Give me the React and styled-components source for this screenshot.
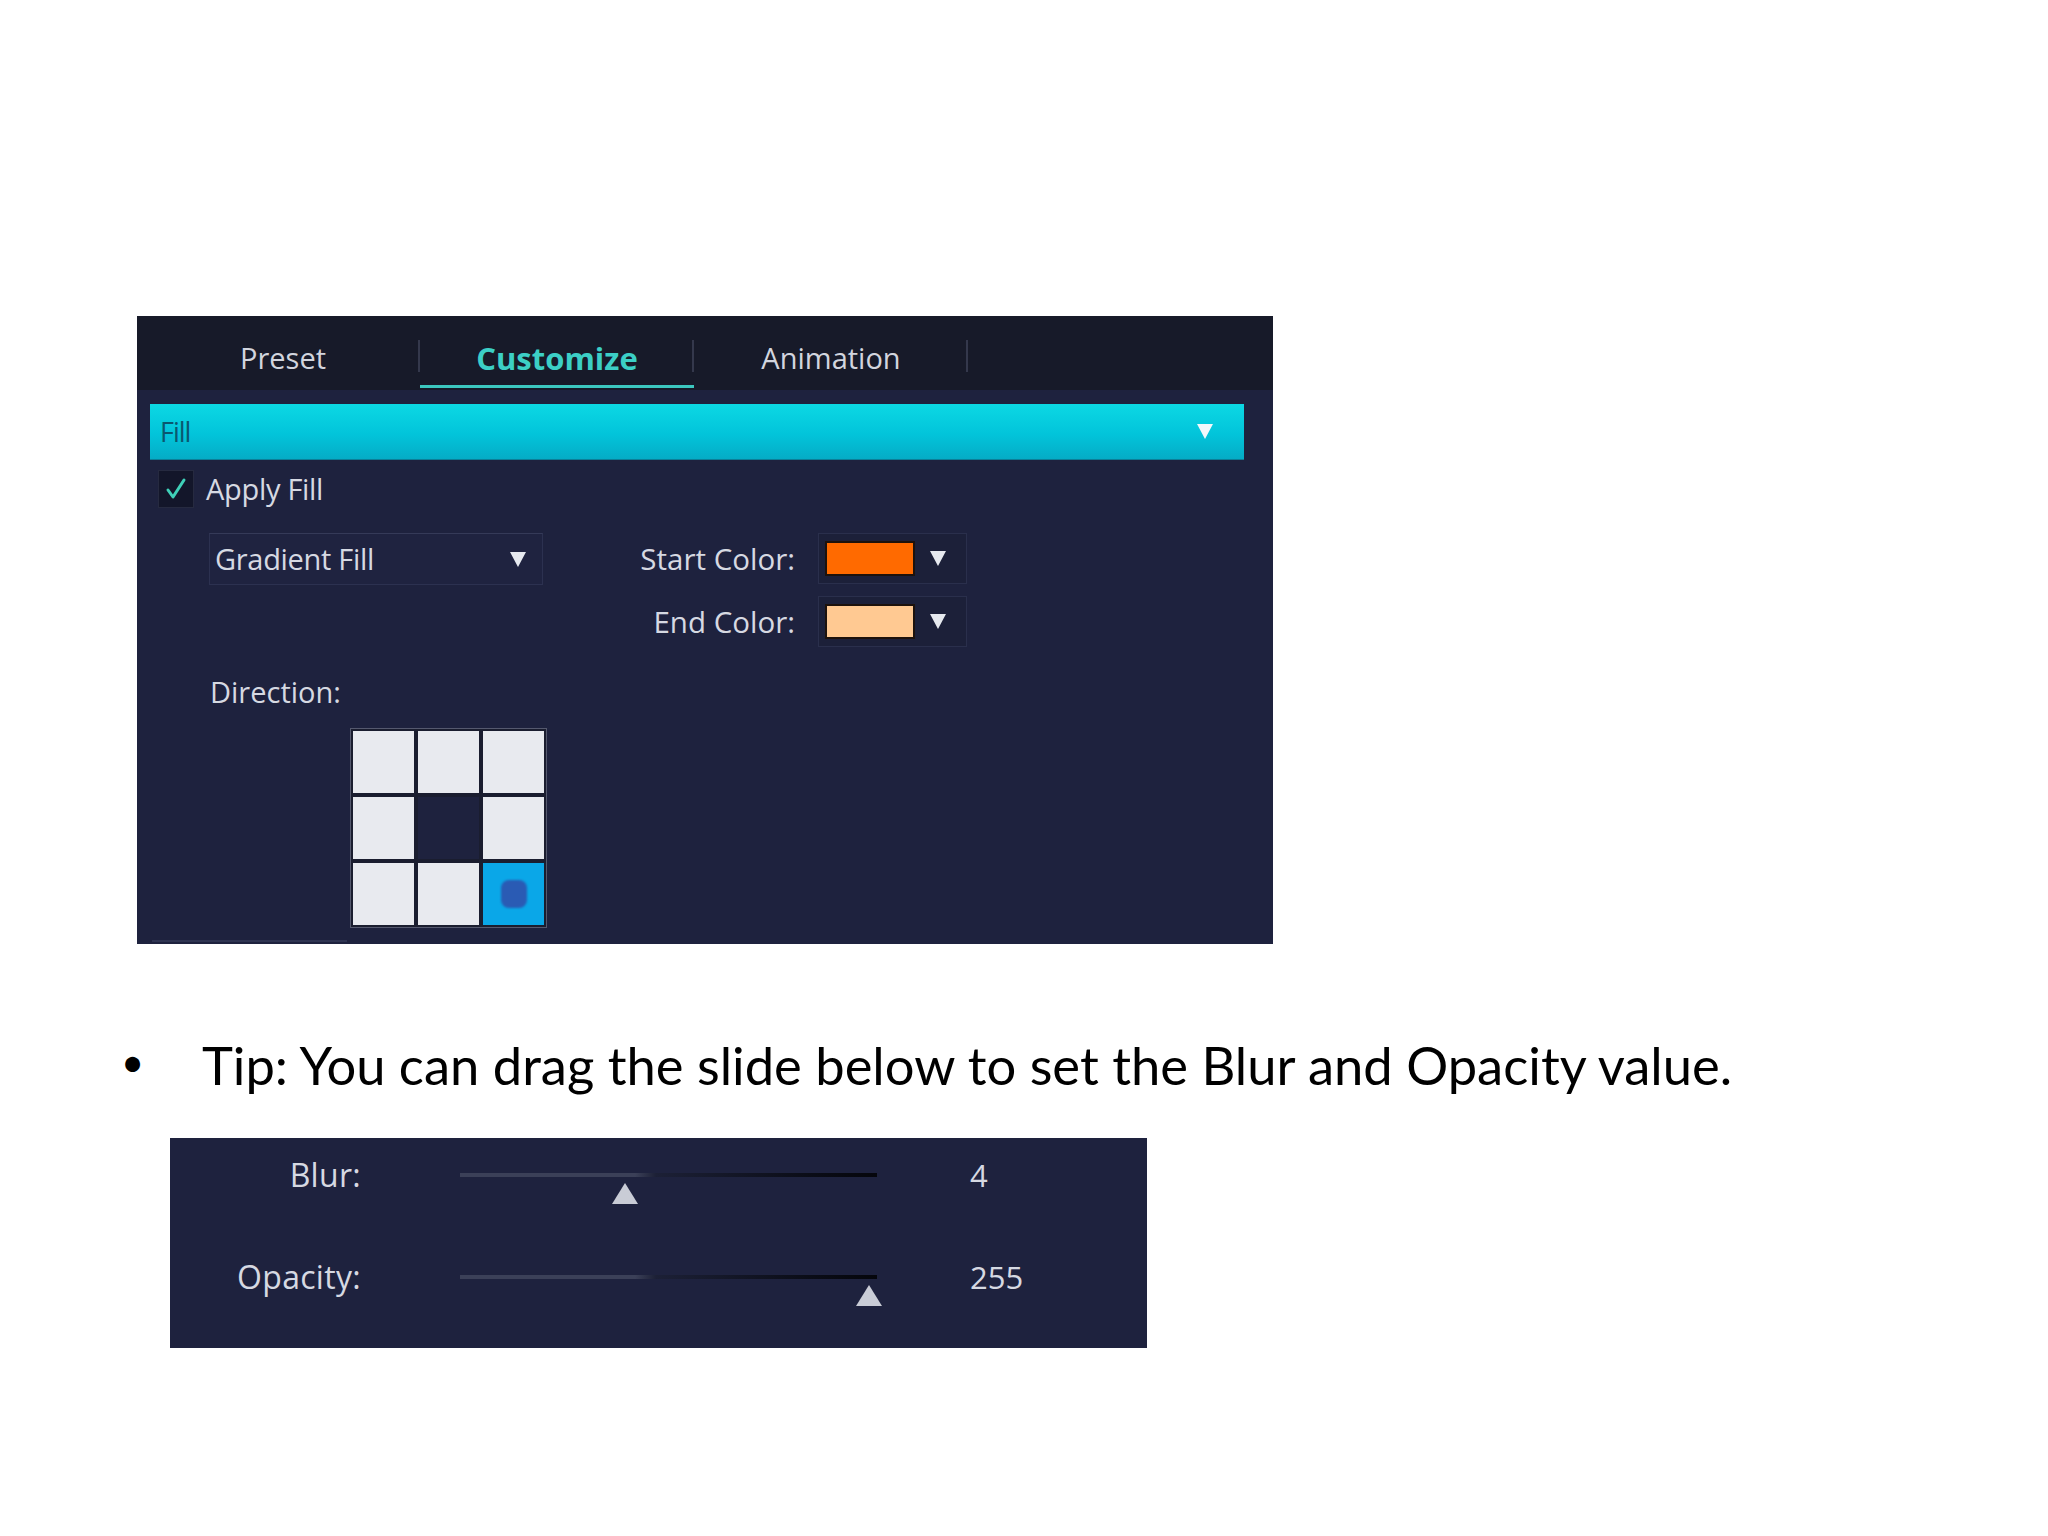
import React from "react";
import styled, { createGlobalStyle } from "styled-components";

const GlobalStyle = createGlobalStyle`
  body {
    margin: 0;
    background: #ffffff;
  }
`;

const TABS = ["Preset", "Customize", "Animation"];

const COLORS = [
  { label: "Start Color:", value: "#ff6a00" },
  { label: "End Color:", value: "#ffc992" },
];

const SLIDERS = [
  { label: "Blur:", value: "4", pos: 39.6 },
  { label: "Opacity:", value: "255", pos: 98 },
];

const App = () => {
  return (
    <Page>
      <GlobalStyle />
      <Panel>
        <TabBar>
          {TABS.map((t, i) => (
            <Tab key={t} $active={i === 1}>
              {t}
            </Tab>
          ))}
        </TabBar>
        <SectionHeader>
          <SectionTitle>Fill</SectionTitle>
          <Caret $size={8} $height={15} $color="#f2f8fb" />
        </SectionHeader>
        <Content>
          <CheckRow>
            <CheckBox>
              <svg width="26" height="26" viewBox="0 0 26 26">
                <polyline
                  points="5,14 10,21 21,4"
                  fill="none"
                  stroke="#3fd0b8"
                  strokeWidth="3"
                  strokeLinecap="round"
                  strokeLinejoin="round"
                />
              </svg>
            </CheckBox>
            <Label>Apply Fill</Label>
          </CheckRow>
          <FillRow>
            <Dropdown>
              <Label>Gradient Fill</Label>
              <Caret $size={8} $height={15} $color="#e6e9ef" />
            </Dropdown>
            <ColorGrid>
              {COLORS.map((c) => (
                <React.Fragment key={c.label}>
                  <ColorLabel>{c.label}</ColorLabel>
                  <ColorButton>
                    <Swatch $color={c.value} />
                    <Caret $size={8} $height={15} $color="#e6e9ef" />
                  </ColorButton>
                </React.Fragment>
              ))}
            </ColorGrid>
          </FillRow>
          <DirectionLabel>Direction:</DirectionLabel>
          <DirectionGrid>
            {Array.from({ length: 9 }).map((_, i) => (
              <Cell key={i} $kind={i === 4 ? "empty" : i === 8 ? "active" : "plain"}>
                {i === 8 && <Knob />}
              </Cell>
            ))}
          </DirectionGrid>
        </Content>
        <FootLine />
      </Panel>

      <TipRow>
        <Bullet>•</Bullet>
        <TipText>Tip: You can drag the slide below to set the Blur and Opacity value.</TipText>
      </TipRow>

      <SliderPanel>
        {SLIDERS.map((s) => (
          <SliderRow key={s.label}>
            <SliderLabel>{s.label}</SliderLabel>
            <Track>
              <Thumb style={{ left: `${s.pos}%` }} />
            </Track>
            <SliderValue>{s.value}</SliderValue>
          </SliderRow>
        ))}
      </SliderPanel>
    </Page>
  );
};

export default App;

const uiFont = `"Open Sans", "Liberation Sans", sans-serif`;

const Page = styled.div`
  width: 2048px;
  min-height: 1536px;
  padding-top: 316px;
  box-sizing: border-box;
  background: #ffffff;
  display: flex;
  flex-direction: column;
`;

const Panel = styled.div`
  position: relative;
  margin-left: 137px;
  width: 1136px;
  height: 628px;
  background: #1e223e;
  display: flex;
  flex-direction: column;
  font-family: ${uiFont};
  color: #d6d9e2;
`;

const TabBar = styled.div`
  height: 74px;
  background: #171a29;
  display: flex;
  padding-left: 9px;
  box-sizing: border-box;
`;

const Tab = styled.div`
  position: relative;
  width: 274px;
  display: flex;
  align-items: center;
  justify-content: center;
  padding-top: 10px;
  box-sizing: border-box;
  font-size: ${(p) => (p.$active ? 31 : 29)}px;
  line-height: 36px;
  font-weight: ${(p) => (p.$active ? 700 : 400)};
  color: ${(p) => (p.$active ? "#3ccfc6" : "#d2d5de")};

  &::after {
    content: "";
    position: absolute;
    right: 0;
    top: 24px;
    height: 32px;
    width: 2px;
    background: #34384c;
  }

  &::before {
    content: "";
    display: ${(p) => (p.$active ? "block" : "none")};
    position: absolute;
    left: 0;
    right: 0;
    bottom: 2px;
    height: 3px;
    background: #3cc7bf;
  }
`;

const SectionHeader = styled.div`
  margin: 14px 29px 0 13px;
  height: 56px;
  display: flex;
  align-items: center;
  justify-content: space-between;
  padding: 0 31px 0 10px;
  background: linear-gradient(#0cd8e4, #02c4da 55%, #05acc6);
  border-bottom: 1px solid #0b7f98;
  box-sizing: border-box;
`;

const SectionTitle = styled.span`
  font-size: 27px;
  letter-spacing: -1px;
  color: #0a5870;
`;

const Caret = styled.span`
  width: 0;
  height: 0;
  border-left: ${(p) => p.$size}px solid transparent;
  border-right: ${(p) => p.$size}px solid transparent;
  border-top: ${(p) => p.$height}px solid ${(p) => p.$color};
`;

const Content = styled.div`
  padding-left: 21px;
  display: flex;
  flex-direction: column;
  align-items: flex-start;
`;

const CheckRow = styled.div`
  margin-top: 10px;
  height: 38px;
  display: flex;
  align-items: center;
  gap: 12px;
`;

const CheckBox = styled.div`
  width: 36px;
  height: 38px;
  box-sizing: border-box;
  background: #13162a;
  border: 1px solid #262a40;
  display: flex;
  align-items: center;
  justify-content: center;
`;

const Label = styled.span`
  font-size: 29px;
  line-height: 36px;
  letter-spacing: -0.3px;
  color: #d6d9e2;
`;

const FillRow = styled.div`
  margin-top: 25px;
  display: flex;
  align-items: flex-start;
`;

const Dropdown = styled.div`
  margin-left: 51px;
  width: 334px;
  height: 52px;
  box-sizing: border-box;
  padding: 0 16px 0 5px;
  display: flex;
  align-items: center;
  justify-content: space-between;
  border: 1px solid #2c3150;
  border-top-color: #353a58;
  background: #1f2340;
`;

const ColorGrid = styled.div`
  margin-left: 86px;
  display: grid;
  grid-template-columns: 166px 149px;
  grid-auto-rows: 51px;
  column-gap: 23px;
  row-gap: 12px;
  align-items: center;
`;

const ColorLabel = styled.span`
  justify-self: end;
  font-size: 29.5px;
  line-height: 36px;
  color: #d6d9e2;
`;

const ColorButton = styled.div`
  height: 51px;
  box-sizing: border-box;
  border: 1px solid #2a2f4c;
  background: #1c2039;
  display: flex;
  align-items: center;
  padding-left: 6px;
  gap: 15px;
`;

const Swatch = styled.span`
  width: 90px;
  height: 35px;
  box-sizing: border-box;
  border: 2px solid #1d120c;
  background: ${(p) => p.$color};
`;

const DirectionLabel = styled.span`
  margin: 27px 0 0 52px;
  font-size: 29px;
  line-height: 36px;
  color: #d6d9e2;
`;

const DirectionGrid = styled.div`
  margin: 18px 0 0 192px;
  display: grid;
  grid-template-columns: repeat(3, 61px);
  grid-template-rows: repeat(3, 62px);
  gap: 4px;
  padding: 2px;
  background: #1a1d2f;
  border: 1px solid #55596e;
`;

const Cell = styled.div`
  display: flex;
  align-items: center;
  justify-content: center;
  background: ${(p) =>
    p.$kind === "empty" ? "#1e223e" : p.$kind === "active" ? "#0aa7e8" : "#e8eaef"};
`;

const Knob = styled.span`
  width: 26px;
  height: 28px;
  border-radius: 8px;
  background: #2a5bb4;
  filter: blur(1px);
`;

const FootLine = styled.div`
  position: absolute;
  left: 15px;
  bottom: 2px;
  width: 195px;
  height: 2px;
  background: #2f3452;
`;

const TipRow = styled.div`
  margin: 90px 0 0 121px;
  display: flex;
  align-items: center;
  font-family: Lato, "Liberation Sans", sans-serif;
  font-size: 52.5px;
  line-height: 62px;
  color: #000000;
`;

const Bullet = styled.span`
  width: 81px;
  flex: none;
  font-size: 40px;
  margin-top: -6px;
`;

const TipText = styled.span`
  white-space: nowrap;
`;

const SliderPanel = styled.div`
  margin: 42px 0 0 170px;
  width: 977px;
  height: 210px;
  box-sizing: border-box;
  padding-top: 19px;
  background: #1e223e;
  display: flex;
  flex-direction: column;
  gap: 66px;
  font-family: ${uiFont};
`;

const SliderRow = styled.div`
  height: 36px;
  display: grid;
  grid-template-columns: 191px 417px auto;
  align-items: center;
`;

const SliderLabel = styled.span`
  justify-self: end;
  font-size: 32px;
  line-height: 36px;
  letter-spacing: 0.3px;
  color: #d6d9e2;
`;

const Track = styled.div`
  position: relative;
  margin-left: 99px;
  width: 417px;
  height: 4px;
  background: linear-gradient(
    to right,
    #3b4058 0%,
    #3b4058 42%,
    #1c2036 47%,
    #0a0c16 85%,
    #05060c 100%
  );
`;

const Thumb = styled.span`
  position: absolute;
  top: 10px;
  transform: translateX(-50%);
  width: 0;
  height: 0;
  border-left: 13px solid transparent;
  border-right: 13px solid transparent;
  border-bottom: 21px solid #c9ccd6;
`;

const SliderValue = styled.span`
  margin-left: 192px;
  font-size: 31px;
  line-height: 36px;
  color: #d6d9e2;
`;
